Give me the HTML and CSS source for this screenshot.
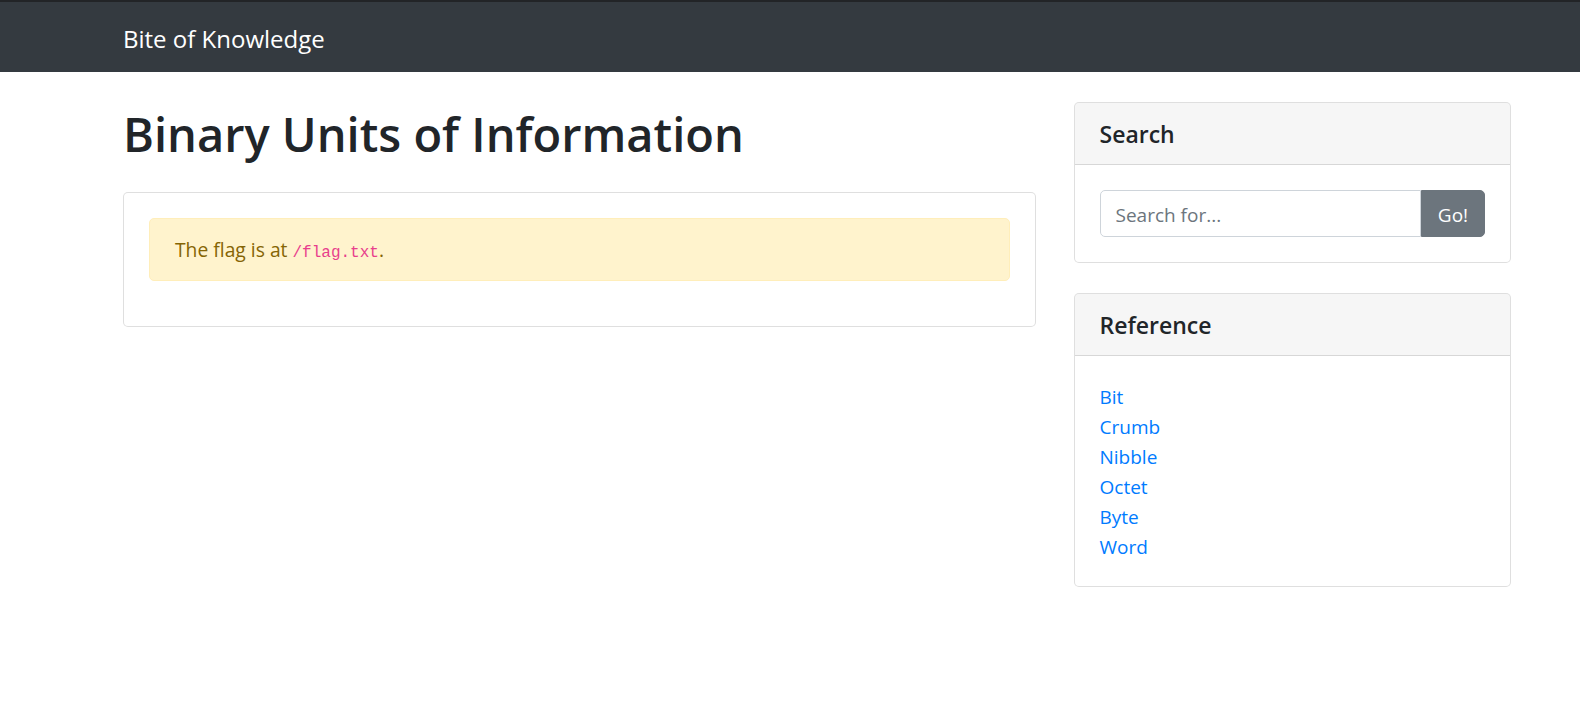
FILE: index.html
```html
<!DOCTYPE html>
<html lang="en">
<head>
<meta charset="utf-8">
<title>Bite of Knowledge</title>
<link rel="stylesheet" href="styles.css">
</head>
<body>
<nav class="navbar">
  <div class="nav-inner">
    <a class="brand" href="#">Bite of Knowledge</a>
  </div>
</nav>
<div class="container">
  <div class="main-col">
    <h1 class="page-title">Binary Units of Information</h1>
    <div class="card">
      <div class="card-body">
        <div class="alert">The flag is at <code class="code">/flag.txt</code>.</div>
      </div>
    </div>
  </div>
  <div class="side-col">
    <div class="card side-card">
      <h5 class="card-header">Search</h5>
      <div class="card-body">
        <div class="input-group">
          <input class="form-control" type="text" placeholder="Search for...">
          <button class="btn" type="button">Go!</button>
        </div>
      </div>
    </div>
    <div class="card side-card">
      <h5 class="card-header">Reference</h5>
      <div class="card-body list-body">
        <ul class="link-list">
          <li><a href="#">Bit</a></li>
          <li><a href="#">Crumb</a></li>
          <li><a href="#">Nibble</a></li>
          <li><a href="#">Octet</a></li>
          <li><a href="#">Byte</a></li>
          <li><a href="#">Word</a></li>
        </ul>
      </div>
    </div>
  </div>
</div>
</body>
</html>
```
FILE: styles.css
```css
* { box-sizing: border-box; }
html, body { margin: 0; padding: 0; }
body {
  font-family: "Open Sans", "Noto Sans", sans-serif;
  font-size: 19px;
  line-height: 30px;
  color: #212529;
  background: #fff;
}
.navbar {
  background: #343a40;
  border-top: 2px solid #222427;
  padding: 10px 0;
}
.nav-inner {
  padding-left: 123px;
}
.brand {
  display: inline-block;
  color: #fff;
  text-decoration: none;
  font-size: 24px;
  line-height: 37.5px;
  padding: 7.5px 0 5px;
}
.container {
  margin-left: 123px;
  width: 1388px;
  display: grid;
  grid-template-columns: 913px 437.5px;
  column-gap: 37.5px;
}
.page-title {
  font-size: 47px;
  line-height: 60px;
  font-weight: 600;
  margin: 32px 0 28px;
  color: #212529;
}
.card {
  border: 1px solid rgba(0,0,0,.125);
  border-radius: 5px;
  background: #fff;
}
.card-body {
  padding: 25px;
}
.alert {
  background: #fff3cd;
  border: 1px solid #ffeeba;
  color: #856404;
  border-radius: 5px;
  padding: 16px 25px 12px;
  margin-bottom: 20px;
  font-size: 19.3px;
}
.code {
  font-family: "Liberation Mono", "DejaVu Sans Mono", monospace;
  font-size: 16px;
  color: #e83e8c;
}
.side-card {
  margin: 30px 0;
  overflow: hidden;
}
.side-card + .side-card { margin-top: 0; }
.card-header {
  margin: 0;
  padding: 16px 25px 14px;
  background: rgba(0,0,0,.035);
  border-bottom: 1px solid rgba(0,0,0,.125);
  font-size: 23px;
  line-height: 31px;
  font-weight: 600;
}
.input-group {
  display: flex;
}
.form-control {
  flex: 1;
  min-width: 0;
  height: 47px;
  padding: 8.5px 15px 6.5px;
  font-family: inherit;
  font-size: 19px;
  line-height: 30px;
  color: #495057;
  border: 1px solid #ced4da;
  border-radius: 5px 0 0 5px;
  outline: none;
}
.form-control::placeholder { color: #6c757d; }
.btn {
  font-family: inherit;
  font-size: 19px;
  line-height: 30px;
  padding: 8.5px 15px 6.5px;
  color: #fff;
  background: #6c757d;
  border: 1px solid #6c757d;
  border-radius: 0 5px 5px 0;
  width: 64px;
}
.list-body {
  padding: 26px 25px 24px;
}
.link-list {
  list-style: none;
  margin: 0;
  padding: 0;
}
.link-list a {
  color: #007bff;
  text-decoration: none;
}
```
